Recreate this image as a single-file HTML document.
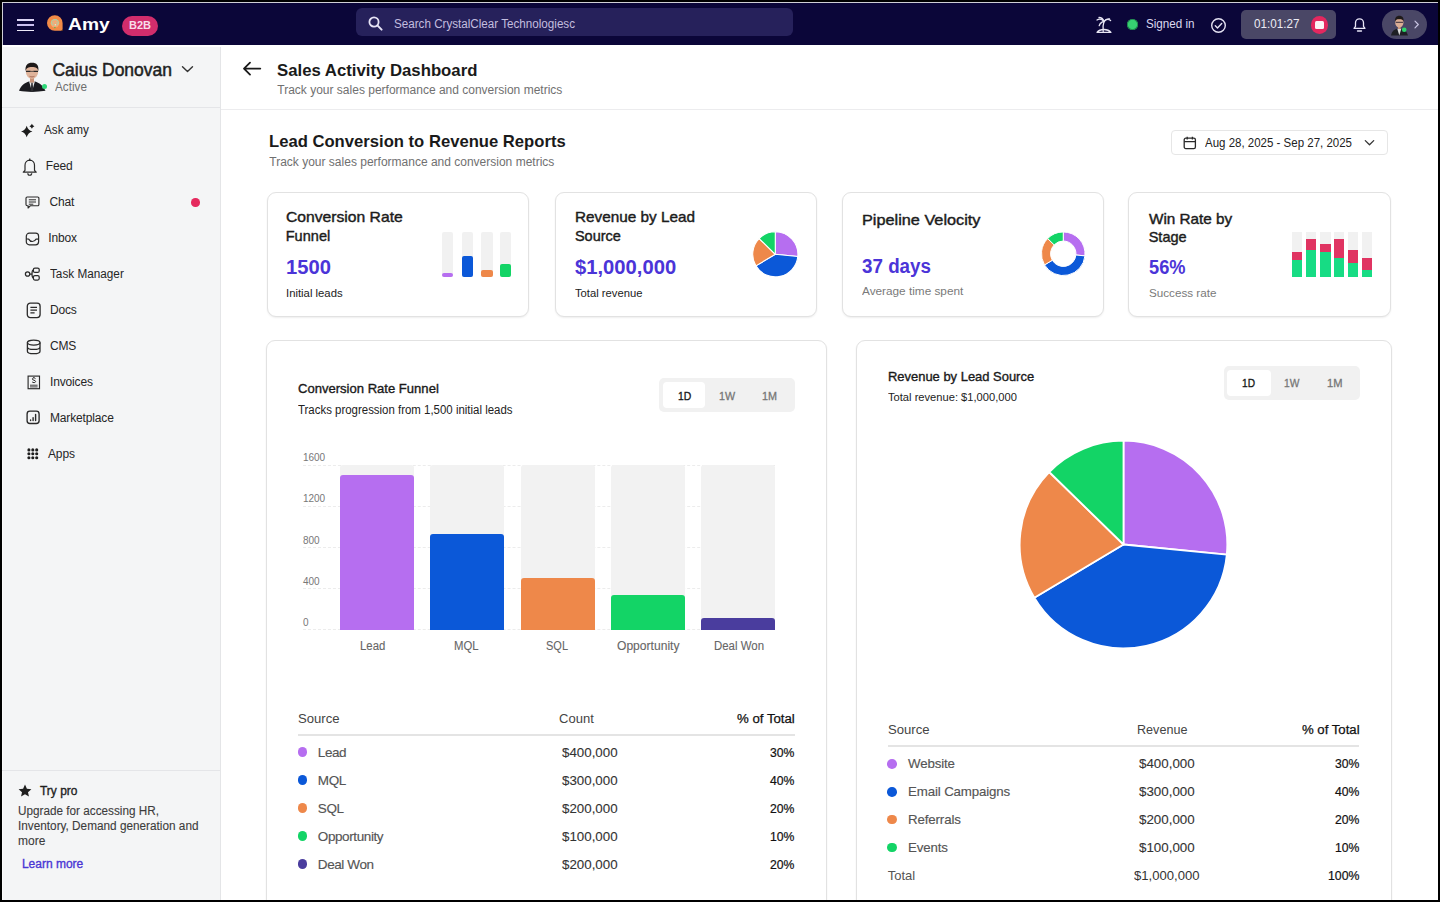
<!DOCTYPE html>
<html><head><meta charset="utf-8">
<style>
*{box-sizing:border-box;margin:0;padding:0}
html,body{width:1440px;height:902px;overflow:hidden;background:#000}
body{font-family:"Liberation Sans",sans-serif;position:relative}
.a{position:absolute}
.t{position:absolute;white-space:nowrap;line-height:1}
</style></head><body>
<div class="a" style="left:2px;top:2px;width:1436.00px;height:898.00px;background:#fff;"></div>
<div class="a" style="left:2px;top:2px;width:1436.00px;height:43.30px;background:#0b0639;"></div>
<div class="a" style="left:2px;top:2px;width:1436.00px;height:1.00px;background:#cfcfd6;"></div>
<div class="a" style="left:2px;top:2px;width:1.00px;height:43.30px;background:#cfcfd6;"></div>
<div class="a" style="left:17px;top:19.2px;width:17.00px;height:1.70px;background:#dcd6f5;"></div>
<div class="a" style="left:17px;top:24.4px;width:17.00px;height:1.70px;background:#cbc0f0;"></div>
<div class="a" style="left:17px;top:29.6px;width:17.00px;height:1.70px;background:#eeeaf8;"></div>
<svg class="a" style="left:46.5px;top:15px" width="17" height="17" viewBox="0 0 17 17">
<path d="M7.8 0.2A7.8 7.8 0 1 0 7.8 15.8H15.6V8A7.8 7.8 0 0 0 7.8 0.2Z" fill="#f28b47"/>
<path d="M14.2 15.8H15.6V14.2z" fill="#1a1208"/>
<circle cx="7.9" cy="8.2" r="4.3" fill="#f5a874"/>
<path d="M4.6 6.4C5.6 4.8 6.8 4.4 7.9 4.8C9 4.4 10.3 4.8 11.2 6.4M4.6 6.4C4.4 8.2 5 9.8 6 10.4M11.2 6.4C11.4 8.2 10.8 9.8 9.8 10.4M6.2 7.6h0.6M9 7.6h0.6M6.8 9.6C7.6 10.2 8.3 10.2 9.1 9.6" fill="none" stroke="#7fe8c4" stroke-width="0.8"/>
<circle cx="7.9" cy="12.6" r="0.7" fill="#22c65a"/>
<path d="M7.9 9.8h0.9" stroke="#fff3e8" stroke-width="1"/></svg>
<div class="t" style="left:68.30px;top:16px;font-size:17px;color:#fff;font-weight:bold;transform:scaleX(1.1313);transform-origin:0 0">Amy</div>
<div class="a" style="left:122px;top:16px;width:36.30px;height:19.60px;background:#d12d6c;border-radius:10px"></div>
<div class="t" style="left:129.10px;top:20px;font-size:10.5px;color:#f8dcea;font-weight:bold;transform:scaleX(1.0468);transform-origin:0 0">B2B</div>
<div class="a" style="left:356px;top:8.4px;width:437.00px;height:27.60px;background:#26215b;border-radius:6px"></div>
<svg class="a" style="left:367px;top:15px" width="17" height="17" viewBox="0 0 17 17">
<circle cx="7" cy="7" r="4.6" fill="none" stroke="#e6e3f5" stroke-width="1.8"/>
<path d="M10.4 10.4l4.2 4.2" stroke="#e6e3f5" stroke-width="2" stroke-linecap="round"/></svg>
<div class="t" style="left:394.00px;top:18px;font-size:12.5px;color:#c3bddf;transform:scaleX(0.9315);transform-origin:0 0">Search CrystalClear Technologiesc</div>
<svg class="a" style="left:1094px;top:14px" width="20" height="20" viewBox="0 0 20 20" fill="none" stroke="#e8e6f4" stroke-width="1.3" stroke-linecap="round" stroke-linejoin="round">
<path d="M10 7.5c-1 3-1.3 6.5-0.8 10"/><path d="M10 7.5c-2-2.5-5-2.8-7-1.5"/><path d="M10 7.5c2-2.3 4.8-2.5 6.6-1"/>
<path d="M10 7.5c-0.8-2.3-2.8-4-5-4"/><path d="M10 7.5c1.5-2.2 3.5-3 5.5-2.5"/><path d="M10 7.5c-2.5 0.3-4 2-4.8 4.2"/>
<path d="M3 18.3c1.5-2 4-2.8 7-2.8s5.3 0.8 7 2.8z"/></svg>
<div class="a" style="left:1126.5px;top:19.2px;width:11.10px;height:11.00px;background:#36cf72;border-radius:50%;box-shadow:0 0 0 0.8px #1e7f4a inset"></div>
<div class="t" style="left:1146.00px;top:18px;font-size:12.5px;color:#dcd9ef;transform:scaleX(0.9324);transform-origin:0 0">Signed in</div>
<svg class="a" style="left:1210px;top:17px" width="17" height="17" viewBox="0 0 17 17" fill="none" stroke="#e4e1f2" stroke-width="1.4" stroke-linecap="round" stroke-linejoin="round">
<circle cx="8.5" cy="8.5" r="6.8"/><path d="M5.3 8.7l2.2 2.2l4.2-4.4"/></svg>
<div class="a" style="left:1241.2px;top:9.5px;width:95.20px;height:29.30px;background:#4a4766;border-radius:5px"></div>
<div class="t" style="left:1253.75px;top:18px;font-size:12.5px;color:#ecebf4;transform:scaleX(0.9328);transform-origin:0 0">01:01:27</div>
<div class="a" style="left:1310.6px;top:16.4px;width:17.80px;height:17.80px;background:#e3285f;border-radius:50%"></div>
<div class="a" style="left:1315.3px;top:21px;width:8.60px;height:8.40px;background:#fbf4f6;border-radius:1.5px"></div>
<svg class="a" style="left:1351px;top:16px" width="17" height="17" viewBox="0 0 17 17" fill="none" stroke="#e8e5f6" stroke-width="1.3" stroke-linejoin="round" stroke-linecap="round">
<path d="M3 12.3h11l-1.5-2V6.8a4 4 0 0 0-8 0v3.5z"/><path d="M6.5 15h4"/></svg>
<div class="a" style="left:1382px;top:9.9px;width:45.40px;height:28.70px;background:#4a4766;border-radius:15px"></div>
<svg class="a" style="left:1389px;top:13px" width="21" height="23" viewBox="0 0 21 23">
<path d="M2 22.5C3 18 5.5 16.3 8 15.8L10.3 16.8L12.6 15.8C15 16.3 17.8 18 19 22.5Z" fill="#1e1f24"/>
<path d="M8.3 15.8L10.3 22.5L12.3 15.8Z" fill="#dddddd"/>
<rect x="9" y="13" width="2.6" height="3" fill="#c99378"/>
<ellipse cx="10.3" cy="9.2" rx="4.2" ry="5.2" fill="#dcae95"/>
<path d="M6 8.8C5.6 4.8 7.5 2.8 10.3 2.8C13.3 2.8 15 4.8 14.6 8.8C14 6.8 12.8 6.2 10.3 6.2C7.8 6.2 6.6 6.8 6 8.8Z" fill="#1e1a1a"/>
<path d="M6.6 9.3h7.6" stroke="#3a2f3a" stroke-width="1"/>
<circle cx="15.2" cy="16.7" r="2.3" fill="#2bd96b"/></svg>
<svg class="a" style="left:1413px;top:20px" width="8" height="9" viewBox="0 0 8 9" fill="none" stroke="#c9c5e2" stroke-width="1.2" stroke-linecap="round" stroke-linejoin="round"><path d="M2 1.2l3.3 3.3L2 7.8"/></svg>
<div class="a" style="left:2px;top:46.5px;width:219.00px;height:853.50px;background:#f4f5f6;border-right:1px solid #e4e5e7"></div>
<div class="a" style="left:2px;top:46.5px;width:1.00px;height:853.50px;background:#fafbfb;"></div>
<svg class="a" style="left:14px;top:58px" width="36" height="36" viewBox="0 0 36 36">
<path d="M5 32.8C7 27.2 11 24.6 15 23.4L18 24.6L21 23.4C25 24.6 29 27.2 31.5 32.8C27 33.6 22.5 33.9 18 33.9S9 33.6 5 32.8Z" fill="#1b1b20"/>
<path d="M15.1 23.5L18 33.6L20.9 23.5L18 24.8Z" fill="#ebebeb"/>
<path d="M17.3 25h1.4l0.6 8.4h-2.6z" fill="#2e2e33"/>
<rect x="16" y="19.5" width="4" height="5" fill="#c99378"/>
<ellipse cx="18" cy="13.6" rx="6.2" ry="7.4" fill="#dfb39a"/>
<path d="M11.6 13.2C11 7 13.6 4.7 18 4.7C22.6 4.7 25 7 24.4 13.2C23.8 10.2 22 8.9 18 8.9C14 8.9 12.2 10.2 11.6 13.2Z" fill="#1e1919"/>
<path d="M12 13.4h4.6M19.4 13.4h4.6" stroke="#2a2a2a" stroke-width="1.4"/>
<path d="M16.6 13.4h2.8" stroke="#2a2a2a" stroke-width="0.7"/>
<path d="M15.5 18.3c1.6 0.8 3.4 0.8 5 0" stroke="#9a5a48" stroke-width="0.8" fill="none"/></svg>
<div class="a" style="left:41.8px;top:84px;width:5.20px;height:5.20px;background:#2fd878;border-radius:50%"></div>
<div class="t" style="left:52.40px;top:62px;font-size:17.5px;color:#1f1f1f;-webkit-text-stroke:0.49px currentColor">Caius Donovan</div>
<svg class="a" style="left:181px;top:64px" width="13" height="10" viewBox="0 0 13 10" fill="none" stroke="#333" stroke-width="1.4" stroke-linecap="round" stroke-linejoin="round"><path d="M1.5 2.7l5 4.9l5-4.9"/></svg>
<div class="t" style="left:55.10px;top:81px;font-size:12px;color:#6e6e6e;transform:scaleX(0.9790);transform-origin:0 0">Active</div>
<div class="a" style="left:2px;top:107.3px;width:218.00px;height:1.00px;background:#e4e5e8;"></div>
<svg class="a" style="left:20px;top:123px" width="17" height="17" viewBox="0 0 17 17" fill="#1c1c1c"><path d="M6.7 2.8Q7.95 7.25 12.4 8.5Q7.95 9.75 6.7 14.2Q5.45 9.75 1.0 8.5Q5.45 7.25 6.7 2.8ZM11.9 0.7999999999999998Q12.5 2.6999999999999997 14.4 3.3Q12.5 3.9 11.9 5.8Q11.3 3.9 9.4 3.3Q11.3 2.6999999999999997 11.9 0.7999999999999998Z"/></svg>
<div class="t" style="left:44.00px;top:124px;font-size:12px;color:#262626;transform:scaleX(0.9779);transform-origin:0 0">Ask amy</div>
<svg class="a" style="left:22px;top:158px" width="16" height="18" viewBox="0 0 16 18" fill="none" stroke="#2a2a2a" stroke-width="1.2" stroke-linejoin="round">
<path d="M1.3 14.2h12.9l-1.7-1.9V7.2a5 5 0 0 0-4.75-5a5 5 0 0 0-4.75 5v5.1z"/><path d="M5.8 15.3a1.95 1.95 0 0 0 3.9 0"/><path d="M7.75 0.6v1.6"/></svg>
<div class="t" style="left:45.80px;top:160px;font-size:12px;color:#262626;letter-spacing:-0.150px">Feed</div>
<svg class="a" style="left:25px;top:196px" width="15" height="14" viewBox="0 0 15 14" fill="none" stroke="#2a2a2a" stroke-width="1.15" stroke-linejoin="round">
<path d="M2.2 1h10.5a1.2 1.2 0 0 1 1.2 1.2v6.3a1.2 1.2 0 0 1-1.2 1.2H5.5l-2.4 2.3v-2.3H2.2A1.2 1.2 0 0 1 1 8.5V2.2A1.2 1.2 0 0 1 2.2 1z"/>
<path d="M3.8 3.8h7.2M3.8 6h7.2M3.8 8.2h4.5" stroke-width="1"/></svg>
<div class="t" style="left:49.40px;top:196px;font-size:12px;color:#262626;letter-spacing:-0.150px">Chat</div>
<svg class="a" style="left:25px;top:231.5px" width="15" height="14" viewBox="0 0 15 14" fill="none" stroke="#2a2a2a" stroke-width="1.2" stroke-linejoin="round">
<rect x="1.3" y="1.2" width="12.3" height="11.6" rx="3"/>
<path d="M1.4 6.8c0.6 0.2 1.5 0.3 2.3 0.3c0.9 1.7 2.2 2.4 3.7 2.4s2.9-0.7 3.7-2.4c0.8 0 1.7-0.1 2.4-0.3"/></svg>
<div class="t" style="left:48.30px;top:232px;font-size:12px;color:#262626;letter-spacing:-0.150px">Inbox</div>
<svg class="a" style="left:24px;top:267px" width="17" height="14" viewBox="0 0 17 14" fill="none" stroke="#2a2a2a" stroke-width="1.25" stroke-linejoin="round">
<circle cx="3.6" cy="7" r="2.2"/><rect x="9.4" y="1" width="5.8" height="4.4" rx="1.5"/><rect x="9.4" y="8.6" width="5.8" height="4.4" rx="1.5"/>
<path d="M5.8 7h2.2M8 7c0-2.2 0-3.8 1.4-3.8M8 7c0 2.2 0 3.8 1.4 3.8"/></svg>
<div class="t" style="left:49.60px;top:268px;font-size:12px;color:#262626;transform:scaleX(0.9791);transform-origin:0 0">Task Manager</div>
<svg class="a" style="left:26px;top:301.5px" width="16" height="17" viewBox="0 0 16 17" fill="none" stroke="#2a2a2a" stroke-width="1.3" stroke-linejoin="round">
<rect x="1.3" y="1.2" width="12.8" height="14.4" rx="3"/><path d="M4.4 5.3h6.6M4.4 8.1h6.6M4.4 10.9h4.2" stroke-width="1.2"/></svg>
<div class="t" style="left:49.90px;top:304px;font-size:12px;color:#262626;letter-spacing:-0.150px">Docs</div>
<svg class="a" style="left:26px;top:338.5px" width="16" height="16" viewBox="0 0 16 16" fill="none" stroke="#2a2a2a" stroke-width="1.3">
<ellipse cx="7.7" cy="3.6" rx="6.3" ry="2.5"/><path d="M1.4 3.6v8.6c0 1.4 2.8 2.5 6.3 2.5s6.3-1.1 6.3-2.5V3.6M1.4 7.9c0 1.4 2.8 2.5 6.3 2.5s6.3-1.1 6.3-2.5"/></svg>
<div class="t" style="left:49.90px;top:340px;font-size:12px;color:#262626;letter-spacing:-0.150px">CMS</div>
<svg class="a" style="left:27px;top:374.5px" width="14" height="15" viewBox="0 0 14 15" fill="none" stroke="#2a2a2a" stroke-width="1.15">
<rect x="1.1" y="1.1" width="11.4" height="12.6"/><path d="M3 10.2h7.6M3 11.9h7.6" stroke-width="0.9"/>
<path d="M8.5 3.6c-0.4-0.5-1-0.7-1.7-0.7c-0.9 0-1.5 0.5-1.5 1.1c0 1.5 3.3 0.9 3.3 2.5c0 0.7-0.7 1.1-1.7 1.1c-0.8 0-1.4-0.3-1.8-0.8M6.8 2v0.9M6.8 7.1v0.9" stroke-width="1"/></svg>
<div class="t" style="left:50.00px;top:376px;font-size:12px;color:#262626;letter-spacing:-0.150px">Invoices</div>
<svg class="a" style="left:26px;top:410.3px" width="15" height="15" viewBox="0 0 15 15" fill="none" stroke="#2a2a2a" stroke-width="1.35">
<rect x="1.1" y="1.1" width="12" height="12.4" rx="2.8"/><path d="M4.6 10.6v-0.6M7.1 10.6V7.6M9.6 10.6V4.4" stroke-width="1.4" stroke-linecap="round"/></svg>
<div class="t" style="left:50.00px;top:412px;font-size:12px;color:#262626;letter-spacing:-0.150px">Marketplace</div>
<svg class="a" style="left:27px;top:447.5px" width="12" height="12" viewBox="0 0 12 12" fill="#1e1e1e">
<circle cx="1.9" cy="1.9" r="1.55"/><circle cx="5.8" cy="1.9" r="1.55"/><circle cx="9.7" cy="1.9" r="1.55"/>
<circle cx="1.9" cy="5.8" r="1.55"/><circle cx="5.8" cy="5.8" r="1.55"/><circle cx="9.7" cy="5.8" r="1.55"/>
<circle cx="1.9" cy="9.7" r="1.55"/><circle cx="5.8" cy="9.7" r="1.55"/><circle cx="9.7" cy="9.7" r="1.55"/></svg>
<div class="t" style="left:48.00px;top:448px;font-size:12px;color:#262626;letter-spacing:-0.150px">Apps</div>
<div class="a" style="left:191px;top:198px;width:8.50px;height:8.50px;background:#e52a5e;border-radius:50%"></div>
<div class="a" style="left:2px;top:769.8px;width:218.00px;height:1.00px;background:#e4e5e8;"></div>
<svg class="a" style="left:17.5px;top:784px" width="14" height="14" viewBox="0 0 14 14" fill="#1f1f1f">
<path d="M7 0.6l1.9 4.1l4.5 0.5l-3.4 3l0.95 4.4L7 10.3l-3.95 2.3L4 8.2L0.6 5.2l4.5-0.5z"/></svg>
<div class="t" style="left:40.40px;top:785px;font-size:12.5px;color:#1e1e1e;-webkit-text-stroke:0.35px currentColor;transform:scaleX(0.9585);transform-origin:0 0">Try pro</div>
<div class="t" style="left:18.00px;top:805px;font-size:12px;color:#3c3c3c;-webkit-text-stroke:0.10px currentColor;transform:scaleX(0.9786);transform-origin:0 0">Upgrade for accessing HR,</div>
<div class="t" style="left:18.00px;top:820px;font-size:12px;color:#3c3c3c;-webkit-text-stroke:0.10px currentColor;transform:scaleX(0.9815);transform-origin:0 0">Inventory, Demand generation and</div>
<div class="t" style="left:18.00px;top:835px;font-size:12px;color:#3c3c3c;-webkit-text-stroke:0.10px currentColor">more</div>
<div class="t" style="left:21.90px;top:858px;font-size:12px;color:#4a36d4;-webkit-text-stroke:0.34px currentColor">Learn more</div>
<svg class="a" style="left:242px;top:60px" width="20" height="17" viewBox="0 0 20 17" fill="none" stroke="#1a1a1a" stroke-width="1.8" stroke-linecap="round" stroke-linejoin="round">
<path d="M2.3 8.6h16M8 2.6l-6 6l6 6"/></svg>
<div class="t" style="left:277.30px;top:62px;font-size:17px;color:#1a1a1a;font-weight:bold;transform:scaleX(0.9850);transform-origin:0 0">Sales Activity Dashboard</div>
<div class="t" style="left:277.30px;top:84px;font-size:12px;color:#707070">Track your sales performance and conversion metrics</div>
<div class="a" style="left:221px;top:109px;width:1217.00px;height:1.00px;background:#ececee;"></div>
<div class="t" style="left:269.30px;top:133px;font-size:17px;color:#1a1a1a;font-weight:bold;transform:scaleX(0.9785);transform-origin:0 0">Lead Conversion to Revenue Reports</div>
<div class="t" style="left:269.30px;top:156px;font-size:12px;color:#707070">Track your sales performance and conversion metrics</div>
<div class="a" style="left:1171.3px;top:130px;width:217.20px;height:25.30px;background:#fff;border:1px solid #e6e6e6;border-radius:4px"></div>
<svg class="a" style="left:1183px;top:136px" width="14" height="14" viewBox="0 0 14 14" fill="none" stroke="#2a2a2a" stroke-width="1.3" stroke-linejoin="round">
<rect x="1.2" y="2.2" width="11.2" height="10.4" rx="1.6"/><path d="M1.2 5.6h11.2M4.2 0.8v2.6M9.4 0.8v2.6"/></svg>
<div class="t" style="left:1205.00px;top:137px;font-size:12px;color:#222;transform:scaleX(0.9578);transform-origin:0 0">Aug 28, 2025 - Sep 27, 2025</div>
<svg class="a" style="left:1364px;top:139px" width="11" height="8" viewBox="0 0 11 8" fill="none" stroke="#333" stroke-width="1.3" stroke-linecap="round" stroke-linejoin="round"><path d="M1.3 1.6l4.2 4.1l4.2-4.1"/></svg>
<div class="a" style="left:266.7px;top:192.3px;width:262.10px;height:125.00px;background:#fff;border:1.5px solid #e2e2e2;border-radius:9px;box-shadow:0 1px 2px rgba(0,0,0,0.07);"></div>
<div class="a" style="left:555px;top:192.3px;width:261.90px;height:125.00px;background:#fff;border:1.5px solid #e2e2e2;border-radius:9px;box-shadow:0 1px 2px rgba(0,0,0,0.07);"></div>
<div class="a" style="left:842.3px;top:192.3px;width:261.90px;height:125.00px;background:#fff;border:1.5px solid #e2e2e2;border-radius:9px;box-shadow:0 1px 2px rgba(0,0,0,0.07);"></div>
<div class="a" style="left:1128.3px;top:192.3px;width:262.50px;height:125.00px;background:#fff;border:1.5px solid #e2e2e2;border-radius:9px;box-shadow:0 1px 2px rgba(0,0,0,0.07);"></div>
<div class="t" style="left:285.70px;top:210px;font-size:14.5px;color:#1c1c1c;-webkit-text-stroke:0.41px currentColor;transform:scaleX(1.0806);transform-origin:0 0">Conversion Rate</div>
<div class="t" style="left:285.70px;top:229px;font-size:14.5px;color:#1c1c1c;-webkit-text-stroke:0.41px currentColor;letter-spacing:0.050px">Funnel</div>
<div class="t" style="left:285.70px;top:258px;font-size:19.5px;color:#4b34d8;font-weight:bold;transform:scaleX(1.0348);transform-origin:0 0">1500</div>
<div class="t" style="left:285.70px;top:288px;font-size:11px;color:#222;transform:scaleX(1.0282);transform-origin:0 0">Initial leads</div>
<div class="t" style="left:574.90px;top:210px;font-size:14.5px;color:#1c1c1c;-webkit-text-stroke:0.41px currentColor;transform:scaleX(1.0548);transform-origin:0 0">Revenue by Lead</div>
<div class="t" style="left:574.90px;top:229px;font-size:14.5px;color:#1c1c1c;-webkit-text-stroke:0.41px currentColor">Source</div>
<div class="t" style="left:574.90px;top:258px;font-size:19.5px;color:#4b34d8;font-weight:bold;transform:scaleX(1.0368);transform-origin:0 0">$1,000,000</div>
<div class="t" style="left:574.90px;top:288px;font-size:11px;color:#222;transform:scaleX(1.0220);transform-origin:0 0">Total revenue</div>
<div class="t" style="left:862.20px;top:213px;font-size:14.5px;color:#1c1c1c;-webkit-text-stroke:0.41px currentColor;transform:scaleX(1.1222);transform-origin:0 0">Pipeline Velocity</div>
<div class="t" style="left:862.20px;top:257px;font-size:19.5px;color:#4b34d8;font-weight:bold;transform:scaleX(0.9642);transform-origin:0 0">37 days</div>
<div class="t" style="left:862.20px;top:286px;font-size:11px;color:#7a7a7a;transform:scaleX(1.0711);transform-origin:0 0">Average time spent</div>
<div class="t" style="left:1148.70px;top:212px;font-size:14.5px;color:#1c1c1c;-webkit-text-stroke:0.41px currentColor;transform:scaleX(1.0534);transform-origin:0 0">Win Rate by</div>
<div class="t" style="left:1148.70px;top:230px;font-size:14.5px;color:#1c1c1c;-webkit-text-stroke:0.41px currentColor">Stage</div>
<div class="t" style="left:1148.70px;top:258px;font-size:19.5px;color:#4b34d8;font-weight:bold;transform:scaleX(0.9351);transform-origin:0 0">56%</div>
<div class="t" style="left:1148.70px;top:288px;font-size:11px;color:#7a7a7a;transform:scaleX(1.0614);transform-origin:0 0">Success rate</div>
<div class="a" style="left:441.7px;top:232px;width:11.80px;height:45.00px;background:#f1f1f1;border-radius:2px"></div>
<div class="a" style="left:441.7px;top:272.9px;width:11.80px;height:4.10px;background:#b66ef0;border-radius:2px"></div>
<div class="a" style="left:461.7px;top:232px;width:11.80px;height:45.00px;background:#f1f1f1;border-radius:2px"></div>
<div class="a" style="left:461.7px;top:255.8px;width:11.80px;height:21.20px;background:#0b58d8;border-radius:2px"></div>
<div class="a" style="left:480.8px;top:232px;width:11.80px;height:45.00px;background:#f1f1f1;border-radius:2px"></div>
<div class="a" style="left:480.8px;top:270.4px;width:11.80px;height:6.60px;background:#ee884a;border-radius:2px"></div>
<div class="a" style="left:499.6px;top:232px;width:11.80px;height:45.00px;background:#f1f1f1;border-radius:2px"></div>
<div class="a" style="left:499.6px;top:263.75px;width:11.80px;height:13.25px;background:#13d466;border-radius:2px"></div>
<div class="a" style="left:1292px;top:232px;width:10.20px;height:45.00px;background:#f1f1f1;"></div>
<div class="a" style="left:1292px;top:252px;width:10.20px;height:8.40px;background:#e03462;"></div>
<div class="a" style="left:1292px;top:260.4px;width:10.20px;height:16.60px;background:#17dc84;"></div>
<div class="a" style="left:1306px;top:232px;width:10.20px;height:45.00px;background:#f1f1f1;"></div>
<div class="a" style="left:1306px;top:239.2px;width:10.20px;height:10.80px;background:#e03462;"></div>
<div class="a" style="left:1306px;top:250px;width:10.20px;height:27.00px;background:#17dc84;"></div>
<div class="a" style="left:1320.4px;top:232px;width:10.20px;height:45.00px;background:#f1f1f1;"></div>
<div class="a" style="left:1320.4px;top:243.75px;width:10.20px;height:7.95px;background:#e03462;"></div>
<div class="a" style="left:1320.4px;top:251.7px;width:10.20px;height:25.30px;background:#17dc84;"></div>
<div class="a" style="left:1334.2px;top:232px;width:10.20px;height:45.00px;background:#f1f1f1;"></div>
<div class="a" style="left:1334.2px;top:239.2px;width:10.20px;height:18.70px;background:#e03462;"></div>
<div class="a" style="left:1334.2px;top:257.9px;width:10.20px;height:19.10px;background:#17dc84;"></div>
<div class="a" style="left:1348px;top:232px;width:10.20px;height:45.00px;background:#f1f1f1;"></div>
<div class="a" style="left:1348px;top:250px;width:10.20px;height:13.10px;background:#e03462;"></div>
<div class="a" style="left:1348px;top:263.1px;width:10.20px;height:13.90px;background:#17dc84;"></div>
<div class="a" style="left:1362px;top:232px;width:10.20px;height:45.00px;background:#f1f1f1;"></div>
<div class="a" style="left:1362px;top:257.5px;width:10.20px;height:12.90px;background:#e03462;"></div>
<div class="a" style="left:1362px;top:270.4px;width:10.20px;height:6.60px;background:#17dc84;"></div>
<svg class="a" style="left:0;top:0" width="1440" height="902"><path d="M775.3 254.3L775.30 231.70A22.6 22.6 0 0 1 797.79 256.51Z" fill="#b66ef0" stroke="#fff" stroke-width="1.1" stroke-linejoin="round"/><path d="M775.3 254.3L797.79 256.51A22.6 22.6 0 0 1 755.89 265.87Z" fill="#0b58d8" stroke="#fff" stroke-width="1.1" stroke-linejoin="round"/><path d="M775.3 254.3L755.89 265.87A22.6 22.6 0 0 1 759.13 238.52Z" fill="#ee884a" stroke="#fff" stroke-width="1.1" stroke-linejoin="round"/><path d="M775.3 254.3L759.13 238.52A22.6 22.6 0 0 1 775.30 231.70Z" fill="#13d466" stroke="#fff" stroke-width="1.1" stroke-linejoin="round"/><path d="M1063.25 231.95A21.8 21.8 0 0 1 1084.95 255.88L1075.89 254.99A12.7 12.7 0 0 0 1063.25 241.05Z" fill="#b66ef0" stroke="#fff" stroke-width="1.0" stroke-linejoin="round"/><path d="M1084.95 255.88A21.8 21.8 0 0 1 1044.52 264.91L1052.34 260.25A12.7 12.7 0 0 0 1075.89 254.99Z" fill="#0b58d8" stroke="#fff" stroke-width="1.0" stroke-linejoin="round"/><path d="M1044.52 264.91A21.8 21.8 0 0 1 1047.65 238.52L1054.16 244.88A12.7 12.7 0 0 0 1052.34 260.25Z" fill="#ee884a" stroke="#fff" stroke-width="1.0" stroke-linejoin="round"/><path d="M1047.65 238.52A21.8 21.8 0 0 1 1063.25 231.95L1063.25 241.05A12.7 12.7 0 0 0 1054.16 244.88Z" fill="#13d466" stroke="#fff" stroke-width="1.0" stroke-linejoin="round"/></svg>
<div class="a" style="left:266px;top:340px;width:561.00px;height:620.00px;background:#fff;border:1.5px solid #e2e2e2;border-radius:9px;box-shadow:0 1px 2px rgba(0,0,0,0.07);"></div>
<div class="t" style="left:298.00px;top:382px;font-size:13px;color:#1a1a1a;-webkit-text-stroke:0.36px currentColor;transform:scaleX(1.0043);transform-origin:0 0">Conversion Rate Funnel</div>
<div class="t" style="left:298.00px;top:404px;font-size:12px;color:#222;transform:scaleX(0.9533);transform-origin:0 0">Tracks progression from 1,500 initial leads</div>
<div class="a" style="left:658.9px;top:377.8px;width:136.10px;height:34.40px;background:#f1f1f1;border-radius:5px"></div>
<div class="a" style="left:662.8px;top:381.7px;width:42.20px;height:26.60px;background:#fff;border-radius:4px"></div>
<div class="t" style="left:677.60px;top:391px;font-size:11.5px;color:#151515;-webkit-text-stroke:0.32px currentColor;transform:scaleX(0.9046);transform-origin:0 0">1D</div>
<div class="t" style="left:718.90px;top:391px;font-size:11.5px;color:#777;-webkit-text-stroke:0.32px currentColor;transform:scaleX(0.9333);transform-origin:0 0">1W</div>
<div class="t" style="left:762.20px;top:391px;font-size:11.5px;color:#777;-webkit-text-stroke:0.32px currentColor;transform:scaleX(0.9384);transform-origin:0 0">1M</div>
<div class="a" style="left:303px;top:464.8px;width:472px;height:0;border-top:1px dashed #ececec"></div>
<div class="t" style="left:303.00px;top:453px;font-size:10px;color:#787878;letter-spacing:-0.100px">1600</div>
<div class="a" style="left:303px;top:505.9px;width:472px;height:0;border-top:1px dashed #ececec"></div>
<div class="t" style="left:303.00px;top:494px;font-size:10px;color:#787878;letter-spacing:-0.100px">1200</div>
<div class="a" style="left:303px;top:547.0px;width:472px;height:0;border-top:1px dashed #ececec"></div>
<div class="t" style="left:303.00px;top:536px;font-size:10px;color:#787878;letter-spacing:-0.100px">800</div>
<div class="a" style="left:303px;top:588.0px;width:472px;height:0;border-top:1px dashed #ececec"></div>
<div class="t" style="left:303.00px;top:577px;font-size:10px;color:#787878;letter-spacing:-0.100px">400</div>
<div class="a" style="left:303px;top:629.1px;width:472px;height:0;border-top:1px dashed #ececec"></div>
<div class="t" style="left:303.00px;top:618px;font-size:10px;color:#787878;letter-spacing:-0.100px">0</div>
<div class="a" style="left:340px;top:465.3px;width:74.00px;height:164.70px;background:#f2f2f2;border-radius:3px 3px 0 0"></div>
<div class="a" style="left:340px;top:475.2px;width:74.00px;height:154.80px;background:#b66ef0;border-radius:3px 3px 0 0"></div>
<div class="a" style="left:430px;top:465.3px;width:74.00px;height:164.70px;background:#f2f2f2;border-radius:3px 3px 0 0"></div>
<div class="a" style="left:430px;top:533.9px;width:74.00px;height:96.10px;background:#0b58d8;border-radius:3px 3px 0 0"></div>
<div class="a" style="left:521px;top:465.3px;width:74.00px;height:164.70px;background:#f2f2f2;border-radius:3px 3px 0 0"></div>
<div class="a" style="left:521px;top:577.6px;width:74.00px;height:52.40px;background:#ee884a;border-radius:3px 3px 0 0"></div>
<div class="a" style="left:611px;top:465.3px;width:74.00px;height:164.70px;background:#f2f2f2;border-radius:3px 3px 0 0"></div>
<div class="a" style="left:611px;top:594.5px;width:74.00px;height:35.50px;background:#13d466;border-radius:3px 3px 0 0"></div>
<div class="a" style="left:701px;top:465.3px;width:74.00px;height:164.70px;background:#f2f2f2;border-radius:3px 3px 0 0"></div>
<div class="a" style="left:701px;top:617.5px;width:74.00px;height:12.50px;background:#4a3d9e;border-radius:3px 3px 0 0"></div>
<div class="t" style="left:360.35px;top:640px;font-size:12px;color:#666;-webkit-text-stroke:0.10px currentColor;transform:scaleX(0.9475);transform-origin:0 0">Lead</div>
<div class="t" style="left:454.10px;top:640px;font-size:12px;color:#666;-webkit-text-stroke:0.10px currentColor;transform:scaleX(0.9456);transform-origin:0 0">MQL</div>
<div class="t" style="left:546.00px;top:640px;font-size:12px;color:#666;-webkit-text-stroke:0.10px currentColor;transform:scaleX(0.9161);transform-origin:0 0">SQL</div>
<div class="t" style="left:617.45px;top:640px;font-size:12px;color:#666;-webkit-text-stroke:0.10px currentColor;transform:scaleX(1.0073);transform-origin:0 0">Opportunity</div>
<div class="t" style="left:714.30px;top:640px;font-size:12px;color:#666;-webkit-text-stroke:0.10px currentColor;transform:scaleX(0.9527);transform-origin:0 0">Deal Won</div>
<div class="t" style="left:297.80px;top:713px;font-size:12.5px;color:#444;transform:scaleX(1.0503);transform-origin:0 0">Source</div>
<div class="t" style="left:559.00px;top:713px;font-size:12.5px;color:#444;transform:scaleX(1.0432);transform-origin:0 0">Count</div>
<div class="t" style="left:736.80px;top:713px;font-size:12.5px;color:#111;-webkit-text-stroke:0.25px currentColor;transform:scaleX(1.0572);transform-origin:0 0">% of Total</div>
<div class="a" style="left:297.8px;top:734px;width:497.70px;height:1.50px;background:#e4e4e4;"></div>
<div class="a" style="left:297.8px;top:747.3px;width:9.40px;height:9.40px;background:#b66ef0;border-radius:50%"></div>
<div class="t" style="left:317.80px;top:746px;font-size:13.5px;color:#555;-webkit-text-stroke:0.15px currentColor;letter-spacing:-0.400px">Lead</div>
<div class="t" style="left:562.00px;top:746px;font-size:13px;color:#333;-webkit-text-stroke:0.10px currentColor;transform:scaleX(1.0252);transform-origin:0 0">$400,000</div>
<div class="t" style="left:770.20px;top:746px;font-size:13px;color:#111;-webkit-text-stroke:0.22px currentColor;transform:scaleX(0.9373);transform-origin:0 0">30%</div>
<div class="a" style="left:297.8px;top:775.3px;width:9.40px;height:9.40px;background:#0b58d8;border-radius:50%"></div>
<div class="t" style="left:317.80px;top:774px;font-size:13.5px;color:#555;-webkit-text-stroke:0.15px currentColor;letter-spacing:-0.400px">MQL</div>
<div class="t" style="left:562.00px;top:774px;font-size:13px;color:#333;-webkit-text-stroke:0.10px currentColor;transform:scaleX(1.0252);transform-origin:0 0">$300,000</div>
<div class="t" style="left:770.20px;top:774px;font-size:13px;color:#111;-webkit-text-stroke:0.22px currentColor;transform:scaleX(0.9373);transform-origin:0 0">40%</div>
<div class="a" style="left:297.8px;top:803.3px;width:9.40px;height:9.40px;background:#ee884a;border-radius:50%"></div>
<div class="t" style="left:317.80px;top:802px;font-size:13.5px;color:#555;-webkit-text-stroke:0.15px currentColor;letter-spacing:-0.400px">SQL</div>
<div class="t" style="left:562.00px;top:802px;font-size:13px;color:#333;-webkit-text-stroke:0.10px currentColor;transform:scaleX(1.0252);transform-origin:0 0">$200,000</div>
<div class="t" style="left:770.20px;top:802px;font-size:13px;color:#111;-webkit-text-stroke:0.22px currentColor;transform:scaleX(0.9373);transform-origin:0 0">20%</div>
<div class="a" style="left:297.8px;top:831.3px;width:9.40px;height:9.40px;background:#13d466;border-radius:50%"></div>
<div class="t" style="left:317.80px;top:830px;font-size:13.5px;color:#555;-webkit-text-stroke:0.15px currentColor;letter-spacing:-0.400px">Opportunity</div>
<div class="t" style="left:562.00px;top:830px;font-size:13px;color:#333;-webkit-text-stroke:0.10px currentColor;transform:scaleX(1.0252);transform-origin:0 0">$100,000</div>
<div class="t" style="left:770.20px;top:830px;font-size:13px;color:#111;-webkit-text-stroke:0.22px currentColor;transform:scaleX(0.9373);transform-origin:0 0">10%</div>
<div class="a" style="left:297.8px;top:859.3px;width:9.40px;height:9.40px;background:#4a3d9e;border-radius:50%"></div>
<div class="t" style="left:317.80px;top:858px;font-size:13.5px;color:#555;-webkit-text-stroke:0.15px currentColor;letter-spacing:-0.400px">Deal Won</div>
<div class="t" style="left:562.00px;top:858px;font-size:13px;color:#333;-webkit-text-stroke:0.10px currentColor;transform:scaleX(1.0252);transform-origin:0 0">$200,000</div>
<div class="t" style="left:770.20px;top:858px;font-size:13px;color:#111;-webkit-text-stroke:0.22px currentColor;transform:scaleX(0.9373);transform-origin:0 0">20%</div>
<div class="a" style="left:856px;top:340px;width:535.60px;height:620.00px;background:#fff;border:1.5px solid #e2e2e2;border-radius:9px;box-shadow:0 1px 2px rgba(0,0,0,0.07);"></div>
<svg class="a" style="left:0;top:0" width="1440" height="902"><path d="M1123.5 544.5L1123.50 440.70A103.8 103.8 0 0 1 1226.80 554.63Z" fill="#b66ef0" stroke="#fff" stroke-width="1.8" stroke-linejoin="round"/><path d="M1123.5 544.5L1226.80 554.63A103.8 103.8 0 0 1 1034.34 597.65Z" fill="#0b58d8" stroke="#fff" stroke-width="1.8" stroke-linejoin="round"/><path d="M1123.5 544.5L1034.34 597.65A103.8 103.8 0 0 1 1049.21 472.00Z" fill="#ee884a" stroke="#fff" stroke-width="1.8" stroke-linejoin="round"/><path d="M1123.5 544.5L1049.21 472.00A103.8 103.8 0 0 1 1123.50 440.70Z" fill="#13d466" stroke="#fff" stroke-width="1.8" stroke-linejoin="round"/></svg>
<div class="t" style="left:887.80px;top:370px;font-size:13px;color:#1a1a1a;-webkit-text-stroke:0.36px currentColor;transform:scaleX(0.9958);transform-origin:0 0">Revenue by Lead Source</div>
<div class="t" style="left:887.80px;top:392px;font-size:11.5px;color:#222;transform:scaleX(0.9692);transform-origin:0 0">Total revenue: $1,000,000</div>
<div class="a" style="left:1224.4px;top:365.6px;width:135.60px;height:34.40px;background:#f1f1f1;border-radius:5px"></div>
<div class="a" style="left:1226.7px;top:370px;width:43.90px;height:26.10px;background:#fff;border-radius:4px"></div>
<div class="t" style="left:1242.20px;top:378px;font-size:11.5px;color:#151515;-webkit-text-stroke:0.32px currentColor;transform:scaleX(0.8842);transform-origin:0 0">1D</div>
<div class="t" style="left:1283.70px;top:378px;font-size:11.5px;color:#777;-webkit-text-stroke:0.32px currentColor;transform:scaleX(0.8928);transform-origin:0 0">1W</div>
<div class="t" style="left:1326.70px;top:378px;font-size:11.5px;color:#777;-webkit-text-stroke:0.32px currentColor;transform:scaleX(0.9697);transform-origin:0 0">1M</div>
<div class="t" style="left:887.80px;top:724px;font-size:12.5px;color:#444;transform:scaleX(1.0503);transform-origin:0 0">Source</div>
<div class="t" style="left:1136.50px;top:724px;font-size:12.5px;color:#444;transform:scaleX(1.0071);transform-origin:0 0">Revenue</div>
<div class="t" style="left:1301.90px;top:724px;font-size:12.5px;color:#111;-webkit-text-stroke:0.25px currentColor;transform:scaleX(1.0536);transform-origin:0 0">% of Total</div>
<div class="a" style="left:887.8px;top:745px;width:471.70px;height:1.50px;background:#e4e4e4;"></div>
<div class="a" style="left:887.4px;top:759.0px;width:9.70px;height:9.70px;background:#b66ef0;border-radius:50%"></div>
<div class="t" style="left:908.10px;top:757px;font-size:13.3px;color:#555;-webkit-text-stroke:0.15px currentColor;letter-spacing:-0.150px">Website</div>
<div class="t" style="left:1139.15px;top:757px;font-size:13px;color:#333;-webkit-text-stroke:0.10px currentColor;transform:scaleX(1.0270);transform-origin:0 0">$400,000</div>
<div class="t" style="left:1335.10px;top:757px;font-size:13px;color:#111;-webkit-text-stroke:0.22px currentColor;transform:scaleX(0.9373);transform-origin:0 0">30%</div>
<div class="a" style="left:887.4px;top:786.9px;width:9.70px;height:9.70px;background:#0b58d8;border-radius:50%"></div>
<div class="t" style="left:908.10px;top:785px;font-size:13.3px;color:#555;-webkit-text-stroke:0.15px currentColor;letter-spacing:-0.150px">Email Campaigns</div>
<div class="t" style="left:1139.15px;top:785px;font-size:13px;color:#333;-webkit-text-stroke:0.10px currentColor;transform:scaleX(1.0270);transform-origin:0 0">$300,000</div>
<div class="t" style="left:1335.10px;top:785px;font-size:13px;color:#111;-webkit-text-stroke:0.22px currentColor;transform:scaleX(0.9373);transform-origin:0 0">40%</div>
<div class="a" style="left:887.4px;top:814.8px;width:9.70px;height:9.70px;background:#ee884a;border-radius:50%"></div>
<div class="t" style="left:908.10px;top:813px;font-size:13.3px;color:#555;-webkit-text-stroke:0.15px currentColor;letter-spacing:-0.150px">Referrals</div>
<div class="t" style="left:1139.15px;top:813px;font-size:13px;color:#333;-webkit-text-stroke:0.10px currentColor;transform:scaleX(1.0270);transform-origin:0 0">$200,000</div>
<div class="t" style="left:1335.10px;top:813px;font-size:13px;color:#111;-webkit-text-stroke:0.22px currentColor;transform:scaleX(0.9373);transform-origin:0 0">20%</div>
<div class="a" style="left:887.4px;top:842.7px;width:9.70px;height:9.70px;background:#13d466;border-radius:50%"></div>
<div class="t" style="left:908.10px;top:841px;font-size:13.3px;color:#555;-webkit-text-stroke:0.15px currentColor;letter-spacing:-0.150px">Events</div>
<div class="t" style="left:1139.15px;top:841px;font-size:13px;color:#333;-webkit-text-stroke:0.10px currentColor;transform:scaleX(1.0270);transform-origin:0 0">$100,000</div>
<div class="t" style="left:1335.10px;top:841px;font-size:13px;color:#111;-webkit-text-stroke:0.22px currentColor;transform:scaleX(0.9373);transform-origin:0 0">10%</div>
<div class="t" style="left:887.80px;top:869px;font-size:13px;color:#555;letter-spacing:-0.050px">Total</div>
<div class="t" style="left:1134.25px;top:869px;font-size:13px;color:#333;transform:scaleX(1.0065);transform-origin:0 0">$1,000,000</div>
<div class="t" style="left:1328.00px;top:869px;font-size:13px;color:#111;-webkit-text-stroke:0.22px currentColor;transform:scaleX(0.9474);transform-origin:0 0">100%</div>
<div class="a" style="left:0;top:900px;width:1440px;height:2px;background:#000"></div>
<div class="a" style="left:1438px;top:0;width:2px;height:902px;background:#000"></div>
</body></html>
